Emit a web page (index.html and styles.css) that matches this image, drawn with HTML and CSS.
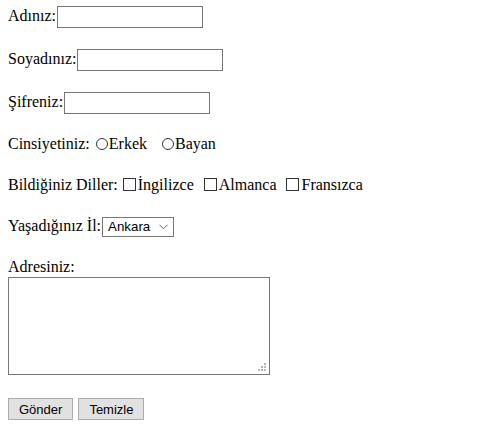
FILE: index.html
```html
<!DOCTYPE html>
<html lang="tr">
<head>
<meta charset="utf-8">
<title>Form</title>
<link rel="stylesheet" href="styles.css">
</head>
<body class="page">
<form class="form">
<div class="row row-field">Adınız:<input class="text" type="text"></div>
<div class="row row-field">Soyadınız:<input class="text" type="text"></div>
<div class="row row-field">Şifreniz:<input class="text" type="password"></div>
<div class="row row-text">Cinsiyetiniz: <label class="opt opt-radio"><input class="radio" type="radio" name="c">Erkek</label> <label class="opt"><input class="radio" type="radio" name="c">Bayan</label></div>
<div class="row row-text">Bildiğiniz Diller: <label class="opt opt-check"><input class="check" type="checkbox">İngilizce</label> <label class="opt opt-check"><input class="check" type="checkbox">Almanca</label> <label class="opt"><input class="check" type="checkbox">Fransızca</label></div>
<div class="row row-text">Yaşadığınız İl:<span class="select-wrap"><select class="select"><option>Ankara</option><option>İstanbul</option><option>İzmir</option></select><svg class="chev" width="9" height="6" viewBox="0 0 9 6"><path d="M0.5 0.8 L4.5 4.8 L8.5 0.8" fill="none" stroke="#606060" stroke-width="1"/></svg></span></div>
<div class="row row-area">
<div class="area-label">Adresiniz:</div>
<div class="area-wrap"><textarea class="area"></textarea><span class="grip"></span></div>
</div>
<div class="row buttons"><input class="btn" type="submit" value="Gönder"><input class="btn" type="reset" value="Temizle"></div>
</form>
</body>
</html>
```
FILE: styles.css
```css
.page {
  margin: 5px 8px 8px;
  font-family: "Liberation Serif", "Times New Roman", serif;
  font-size: 16px;
  color: #000;
  background: #fff;
}
.form { margin: 0; }
.row { margin: 0 0 21px; white-space: nowrap; }
.row-field { height: 22px; line-height: 22px; }
.row-text { height: 20px; line-height: 20px; }
.opt-radio { margin-right: 9px; }
.opt-check { margin-right: 5px; }
.text {
  width: 146px;
  height: 22px;
  box-sizing: border-box;
  border: 1px solid #767676;
  margin: 0 0 0 1px;
  padding: 1px 2px;
  vertical-align: middle;
  font-family: "Liberation Sans", Arial, sans-serif;
  font-size: 13.33px;
  background: #fff;
}
.radio {
  -webkit-appearance: none;
  appearance: none;
  width: 12px;
  height: 12px;
  box-sizing: border-box;
  border: 1px solid #333;
  border-radius: 50%;
  margin: 0 1px 0 2px;
  vertical-align: -1px;
  background: #fff;
}
.check {
  -webkit-appearance: none;
  appearance: none;
  width: 13px;
  height: 13px;
  box-sizing: border-box;
  border: 1px solid #333;
  margin: 0 2px 0 1px;
  vertical-align: -1px;
  background: #fff;
}
.select-wrap {
  position: relative;
  display: inline-block;
  vertical-align: middle;
  height: 20px;
  margin-left: 1px;
}
.select {
  -webkit-appearance: none;
  appearance: none;
  width: 72px;
  height: 20px;
  box-sizing: border-box;
  border: 1px solid #767676;
  border-radius: 0;
  padding: 0 0 0 5px;
  margin: 0;
  background: #fff;
  color: #000;
  font-family: "Liberation Sans", Arial, sans-serif;
  font-size: 13.33px;
  line-height: 18px;
  vertical-align: top;
}
.chev {
  position: absolute;
  right: 6px;
  top: 7px;
  pointer-events: none;
}
.row-area { display: flex; flex-direction: column; align-items: flex-start; margin-bottom: 23px; }
.area-label { height: 20px; line-height: 20px; }
.area-wrap { position: relative; width: 262px; height: 98px; }
.area {
  display: block;
  width: 262px;
  height: 98px;
  box-sizing: border-box;
  border: 1px solid #767676;
  margin: 0;
  resize: none;
  background: #fff;
}
.grip {
  position: absolute;
  right: 4px;
  bottom: 4px;
  width: 8px;
  height: 8px;
  background:
    linear-gradient(#b4b4b4, #b4b4b4) 6px 0 / 2px 2px no-repeat,
    linear-gradient(#b4b4b4, #b4b4b4) 3px 3px / 2px 2px no-repeat,
    linear-gradient(#b4b4b4, #b4b4b4) 6px 3px / 2px 2px no-repeat,
    linear-gradient(#b4b4b4, #b4b4b4) 0 6px / 2px 2px no-repeat,
    linear-gradient(#b4b4b4, #b4b4b4) 3px 6px / 2px 2px no-repeat,
    linear-gradient(#b4b4b4, #b4b4b4) 6px 6px / 2px 2px no-repeat;
  pointer-events: none;
}
.buttons { display: flex; gap: 5px; height: 22px; }
.btn {
  -webkit-appearance: none;
  appearance: none;
  font-family: "Liberation Sans", Arial, sans-serif;
  font-size: 13px;
  color: #000;
  background: #e1e1e1;
  border: 1px solid #adadad;
  border-radius: 0;
  padding: 0 10px;
  height: 22px;
  margin: 0;
}
```
